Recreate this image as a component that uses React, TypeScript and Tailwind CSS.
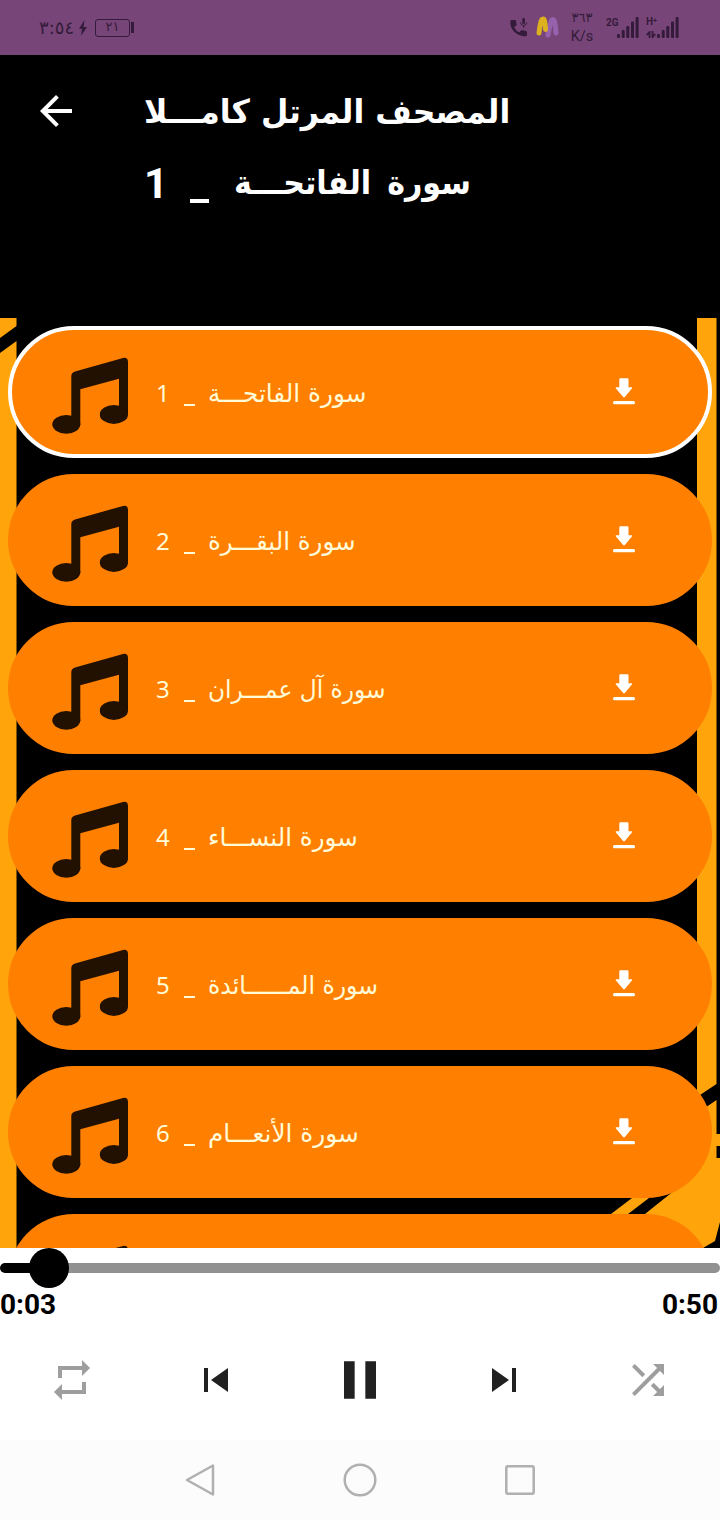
import { MdArrowBack, MdPause, MdRepeat, MdShuffle, MdSkipNext, MdSkipPrevious } from "react-icons/md";

const tracks = [
  { id: 1, name: "سورة الفاتحـــة", fit: "scale-x-[0.988]" },
  { id: 2, name: "سورة البقـــرة", fit: "scale-x-[0.98]" },
  { id: 3, name: "سورة آل عمـــران", fit: "scale-x-[0.932]" },
  { id: 4, name: "سورة النســـاء", fit: "scale-x-[0.98]" },
  { id: 5, name: "سورة المــــــائدة", fit: "scale-x-[0.94]" },
  { id: 6, name: "سورة الأنعـــام", fit: "scale-x-[0.99]" },
];

function SignalBars() {
  return (
    <svg width="22" height="21" viewBox="0 0 22 21" fill="currentColor" aria-hidden="true">
      <rect x="0" y="17" width="3" height="4" rx="1" />
      <rect x="4.7" y="13" width="3" height="8" rx="1" />
      <rect x="9.3" y="9" width="3" height="12" rx="1" />
      <rect x="14" y="4.5" width="3" height="16.5" rx="1" />
      <rect x="18.6" y="0" width="3" height="21" rx="1" />
    </svg>
  );
}

function StatusBar() {
  return (
    <div className="flex h-[55px] shrink-0 items-center bg-[#774577] text-[#351b3b]">
      <span dir="ltr" className="ml-[39px] w-[35px] text-[18px] leading-none whitespace-nowrap">
        ٣:٥٤
      </span>
      <svg className="ml-1" width="10" height="16" viewBox="0 0 10 16" fill="currentColor" aria-hidden="true">
        <path d="M6.5 0 1 8.7h3L3 16l6-9H5.500Z" />
      </svg>
      <div className="ml-[7px] flex h-[18px] w-[35px] items-center justify-center rounded-[3px] border border-current pb-[2px] text-[13px] leading-none">
        ٢١
      </div>
      <div className="ml-px h-[11px] w-[3px] bg-current" />

      <svg className="ml-[376px]" width="18" height="19" viewBox="0 0 18 19" fill="currentColor" aria-hidden="true">
        <path d="M1.500 2H5q1 0 1 1l.7 4-2.500 2.300q2 4 5 5L11.500 12l4.500 1q1 .2 1 1.200V17q0 1.300-1.500 1.300C6 18 0 11.500.3 3.500Q.3 2 1.500 2Z" />
        <rect x="12.300" y="0" width="2.600" height="6" rx="1.300" />
        <path d="M10.500 4.500q.5 3 3.100 3t3.200-3M13.600 7.500V10" fill="none" stroke="currentColor" />
      </svg>
      <svg className="ml-2" width="24" height="23" viewBox="0 0 24 23" fill="none" strokeLinecap="round" aria-hidden="true">
        <path d="M12 19Q15 2 17 4q2-1 3 13" stroke="#9762ad" strokeWidth="5" />
        <path d="M3 17Q5 1 7 3.500q2-2 2.500 10" stroke="#ddb01f" strokeWidth="5" />
      </svg>
      <div className="ml-[10px] flex w-6 flex-col items-center leading-none">
        <span className="text-[13px] leading-[17px]">٣٦٣</span>
        <span className="font-[Roboto] text-[14.5px] leading-[21px]">K/s</span>
      </div>
      <div className="ml-3 flex items-center">
        <span className="mb-[11px] w-[11px] origin-left scale-x-90 font-[Roboto] text-[11px] leading-none font-bold">2G</span>
        <SignalBars />
      </div>
      <div className="ml-[7px] flex items-center">
        <div className="flex h-[21px] w-[11px] flex-col justify-between">
          <span className="font-[Roboto] text-[10px] leading-none font-bold">H⁺</span>
          <svg width="10" height="7" viewBox="0 0 10 7" fill="none" stroke="currentColor" strokeWidth="1.800" aria-hidden="true">
            <path d="M3.500 7V1L.7 4M6.500 0v6l2.800-3" />
          </svg>
        </div>
        <SignalBars />
      </div>
    </div>
  );
}

function Header() {
  return (
    <header className="flex h-[263px] shrink-0 bg-black pt-8 pl-8 text-white">
      <MdArrowBack className="size-12 shrink-0" />
      <div className="ml-[64px] flex flex-col items-start font-bold whitespace-nowrap">
        <h1 dir="rtl" className="origin-left scale-x-[0.955] text-[33px] leading-[50px]">
          المصحف المرتل كامـــلا
        </h1>
        <h2 className="mt-[21px] flex h-[50px] items-center text-[33px]">
          <span className="w-[46px] font-[Roboto] text-[42px]">1</span>
          <span className="mr-[25px] h-1 w-[19px] translate-y-[18px] bg-white" />
          <span dir="rtl" className="origin-left scale-x-[0.915] [word-spacing:6px]">
            سورة الفاتحـــة
          </span>
        </h2>
      </div>
    </header>
  );
}

function MusicNote() {
  return (
    <svg className="size-20 shrink-0 overflow-visible" viewBox="0 0 80 80" fill="#221100" aria-hidden="true">
      <path d="M21.300 72V24Q21.300 20.500 25 19.500L73 5.900Q78 5 78 10V63H69V26.700L30.300 37.300V73Z" />
      <ellipse cx="16.300" cy="72.300" rx="14" ry="9.400" />
      <ellipse cx="63.900" cy="62.400" rx="14.100" ry="9.500" />
    </svg>
  );
}

function DownloadIcon() {
  return (
    <svg className="mr-[73px] ml-auto shrink-0" width="22" height="28" viewBox="0 0 22 28" fill="#fff" aria-hidden="true">
      <path d="M7.500.3H14.300q1.200 0 1.200 1.200V9.300H18.300q1.500 0 .6 1.200L11.800 19q-.8.8-1.600 0L2.900 10.500Q2 9.300 3.500 9.300h2.800V1.500Q6.300.3 7.500.3Z" />
      <rect y="23" width="22" height="3.200" rx="1.500" />
    </svg>
  );
}

function Backdrop() {
  return (
    <svg className="absolute inset-0" width="720" height="930" viewBox="0 318 720 930" fill="#ffa50b" aria-hidden="true">
      <path d="M0 318H16.500V326L0 338ZM0 353 16.500 341V1248H0Z" />
      <path d="M697 318H716.500V1084L697 1097Z" />
      <path d="M690 1118 716.500 1100V1134H720V1146H716.500V1158H720V1222L715 1241 703 1248H600L697 1173Z" />
      <path d="M560 1160H697V1172L645 1214 600 1248H560Z" fill="#000" />
      <path d="M632 1198H649L628 1214H611Z" />
    </svg>
  );
}

function TrackList() {
  return (
    <main className="relative h-[930px] shrink-0 overflow-hidden bg-black">
      <Backdrop />
      <ul className="relative flex flex-col gap-4 p-2">
        {tracks.map((track) => (
          <li
            key={track.id}
            className={
              track.id === 1
                ? "flex h-[132px] shrink-0 items-center rounded-full border-4 border-white bg-[#ff8000] pl-[38px]"
                : "flex h-[132px] shrink-0 items-center rounded-full border-4 border-[#ff8000] bg-[#ff8000] pl-[38px]"
            }
          >
            <MusicNote />
            <div className="mt-[3px] ml-[26px] flex items-center text-[25px] leading-[40px] whitespace-nowrap text-[#fffbd8]">
              <span className="w-[28px] -translate-y-px font-['Noto_Sans'] text-[24px]">{track.id}</span>
              <span className="mr-[13px] h-[2px] w-[11px] translate-y-[11px] bg-[#fffbd8]" />
              <span dir="rtl" className={`origin-left ${track.fit}`}>
                {track.name}
              </span>
            </div>
            <DownloadIcon />
          </li>
        ))}
        {/* next row, peeking out above the player */}
        <li className="flex h-[132px] shrink-0 items-center rounded-full bg-[#ff8000] pl-[42px]">
          <MusicNote />
        </li>
      </ul>
    </main>
  );
}

function Player() {
  return (
    <footer className="flex h-48 shrink-0 flex-col bg-white">
      <div className="flex h-10 items-center">
        <div className="h-[10px] w-[35px] rounded-l-full bg-black" />
        <div className="z-10 -ml-[6px] size-10 shrink-0 rounded-full bg-black" />
        <div className="-ml-1 h-[10px] flex-1 rounded-r-full bg-[#919191]" />
      </div>
      <div className="flex h-8 items-center justify-between pt-[2px] pr-[2px] font-[Roboto] text-[28px] leading-none font-bold text-black">
        <span>0:03</span>
        <span>0:50</span>
      </div>
      <div className="grid h-[120px] grid-cols-5 items-center justify-items-center text-[#212121]">
        <MdRepeat className="size-12 text-[#9e9e9e]" />
        <MdSkipPrevious className="size-12" />
        <MdPause className="size-16" />
        <MdSkipNext className="size-12" />
        <MdShuffle className="size-12 text-[#9e9e9e]" />
      </div>
    </footer>
  );
}

function NavigationBar() {
  return (
    <nav className="flex h-20 shrink-0 items-center justify-center gap-[120px] bg-[#fcfcfc]">
      <svg width="40" height="40" viewBox="0 0 40 40" fill="none" stroke="#b0b0b0" strokeWidth="2.500" strokeLinejoin="round" aria-hidden="true">
        <path d="M33 5.500V34.500L7 20Z" />
      </svg>
      <svg width="40" height="40" viewBox="0 0 40 40" fill="none" stroke="#b0b0b0" strokeWidth="2.500" aria-hidden="true">
        <circle cx="20" cy="20" r="15.300" />
      </svg>
      <svg width="40" height="40" viewBox="0 0 40 40" fill="none" stroke="#b0b0b0" strokeWidth="2.500" aria-hidden="true">
        <rect x="6.300" y="6.300" width="27.400" height="27.400" rx="1.500" />
      </svg>
    </nav>
  );
}

export default function App() {
  return (
    <div className="flex h-[1520px] w-[720px] flex-col overflow-hidden bg-black font-['DejaVu_Sans',sans-serif]">
      <StatusBar />
      <Header />
      <TrackList />
      <Player />
      <NavigationBar />
    </div>
  );
}
